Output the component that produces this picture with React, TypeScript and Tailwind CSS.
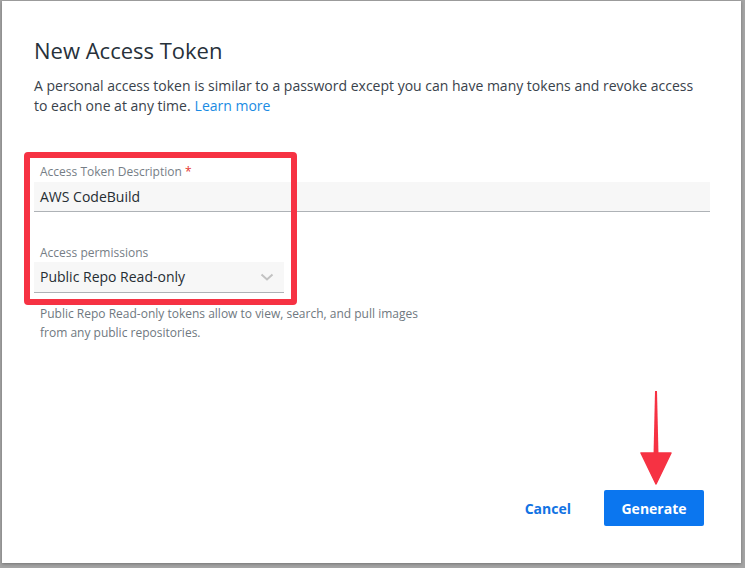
export default function App() {
  return (
    <div className="w-[745px] h-[568px] bg-[#a4a4a4] pl-[2px] pt-px overflow-hidden font-['Open_Sans',sans-serif]">
      <div className="relative w-[739px] h-[562px] bg-white shadow-[0_1px_3px_rgba(0,0,0,0.3)] pt-[34px] pl-[32px] pr-[31px]">
        <h2 className="text-[22px] leading-[30px] text-[#27313a] font-medium">New Access Token</h2>
        <div className="mt-[11px] text-[14px] leading-[20px] text-[#39424b]">
          <p>A personal access token is similar to a password except you can have many tokens and revoke access</p>
          <p className="flex gap-[4px]">
            <span>to each one at any time.</span>
            <a className="text-[#1a8be3]">Learn more</a>
          </p>
        </div>

        <div className="mt-[48px]">
          <label className="block pl-[6px] text-[12px] leading-[16px] text-[#767e86]">
            Access Token Description <span className="text-[#e5352e]">*</span>
          </label>
          <div className="mt-[2px] h-[30px] w-[676px] bg-[#f7f7f7] border-b border-[#aeb2b6] pl-[6px] pb-px flex items-center text-[14px] text-[#262d33]">
            AWS CodeBuild
          </div>

          <label className="block mt-[33px] pl-[6px] text-[12px] leading-[16px] text-[#767e86]">
            Access permissions
          </label>
          <div className="mt-px h-[31px] w-[250px] bg-[#f7f7f7] border-b border-[#aeb2b6] pl-[6px] pr-[10px] pb-px flex items-center justify-between text-[14px] text-[#262d33]">
            <span>Public Repo Read-only</span>
            <svg width="14" height="8" viewBox="0 0 14 8" fill="none">
              <path d="M1.5 1.5 L7 6.5 L12.5 1.5" stroke="#c2c2c2" strokeWidth="2" />
            </svg>
          </div>

          <p className="mt-[11px] pl-[6px] text-[12px] leading-[19px] text-[#6f7880]">
            Public Repo Read-only tokens allow to view, search, and pull images
            <br />
            from any public repositories.
          </p>
        </div>

        <div className="absolute right-[37px] bottom-[37px] flex items-center gap-[17px]">
          <button className="h-[36px] px-4 text-[14px] font-bold text-[#1172e3]">Cancel</button>
          <button className="h-[36px] w-[100px] rounded-[2px] bg-[#0b76ef] text-[14px] font-bold text-white">
            Generate
          </button>
        </div>

        {/* annotation box */}
        <div className="absolute left-[22px] top-[151px] w-[273px] h-[153px] border-[6px] border-[#f63243] rounded-[4px] pointer-events-none" />

        {/* annotation arrow */}
        <svg className="absolute left-[636px] top-[388px]" width="36" height="96" viewBox="0 0 36 96">
          <path d="M17 2 L19 2 L20.5 66 L15.5 66 Z" fill="#f63243" />
          <path d="M3 64 L33 64 L18 95 Z" fill="#f63243" strokeLinejoin="round" stroke="#f63243" strokeWidth="1.5" />
        </svg>
      </div>
    </div>
  );
}
